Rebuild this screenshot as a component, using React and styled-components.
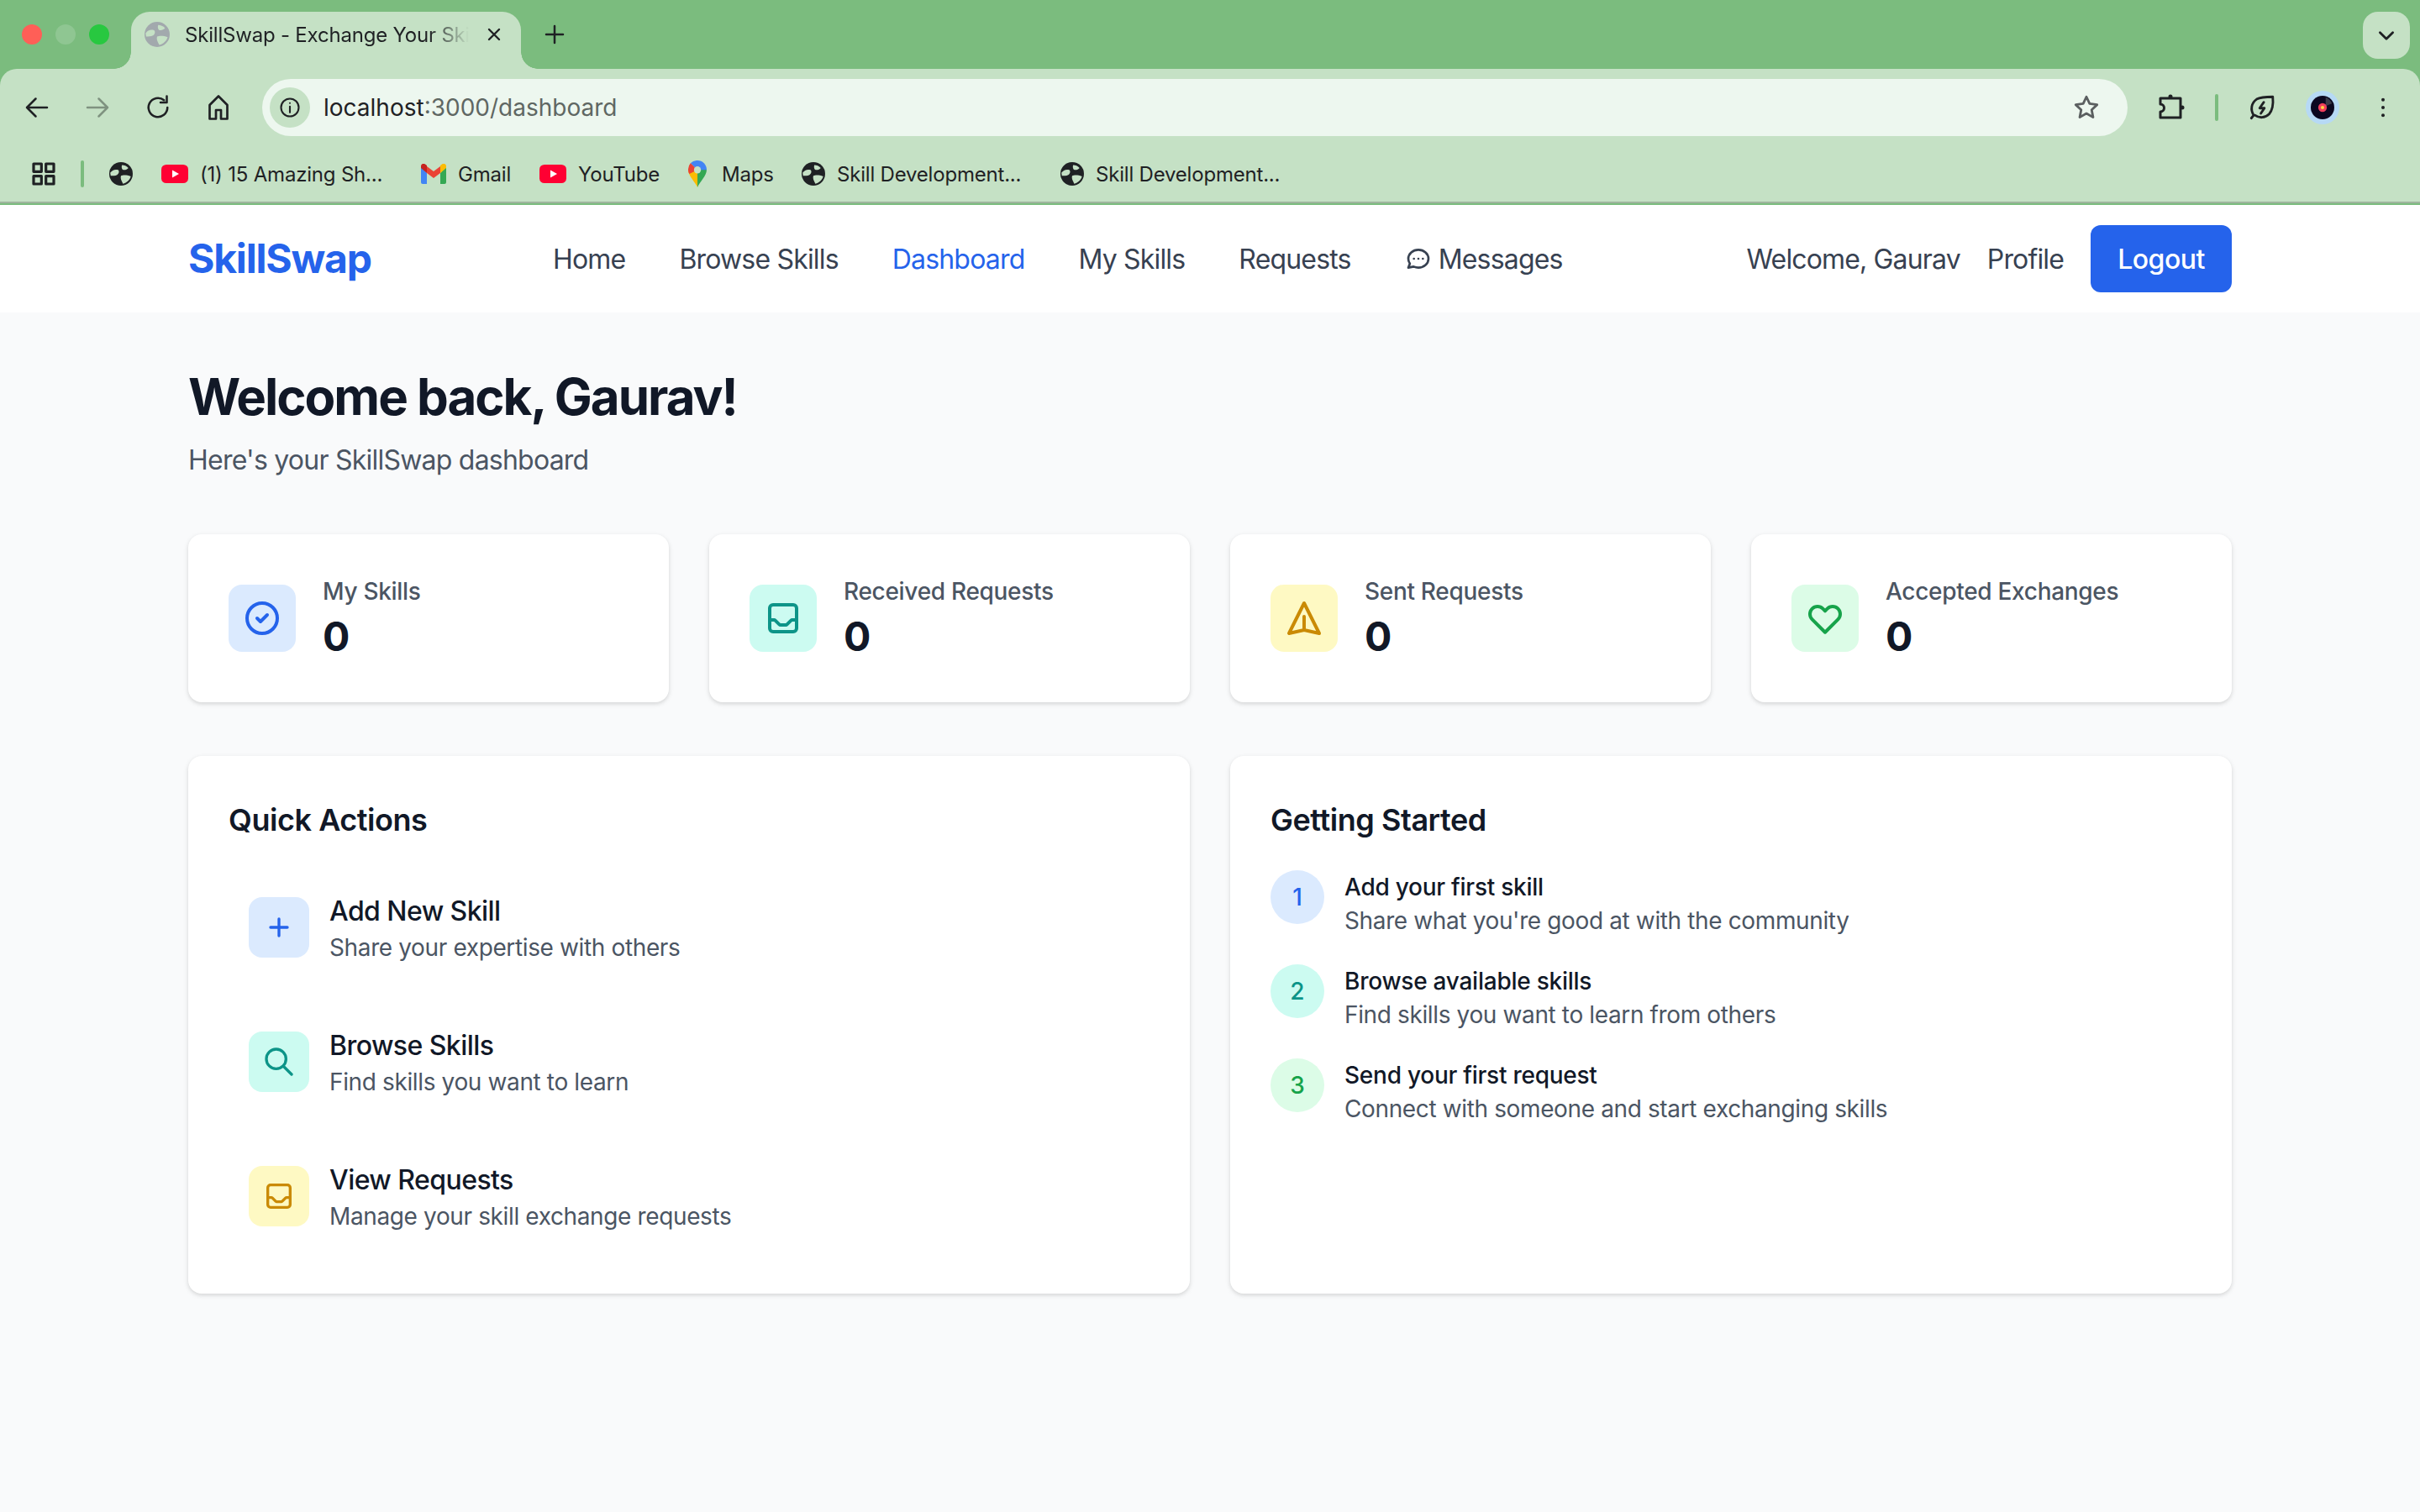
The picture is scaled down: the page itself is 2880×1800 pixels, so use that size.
import styled, { createGlobalStyle } from "styled-components";

const Global = createGlobalStyle`
  * { box-sizing: border-box; }
  html, body { margin: 0; padding: 0; background: #f9fafb; }
  body { font-family: Inter, "Liberation Sans", sans-serif; }
`;

const Page = styled.div`
  width: 2880px;
  height: 1800px;
  overflow: hidden;
  display: flex;
  flex-direction: column;
  background: #f9fafb;
`;

/* browser chrome */
const Chrome = styled.div`
  height: 244px;
  background: #7bbc7e;
  display: flex;
  flex-direction: column;
  color: #1f2124;
`;

const TabStrip = styled.div`
  height: 82px;
  display: flex;
  align-items: flex-start;
  padding: 14px 12px 0 26px;
`;

const Lights = styled.div`
  display: flex;
  gap: 16px;
  padding-top: 15px;
  margin-right: 26px;
`;

const Light = styled.span`
  width: 24px;
  height: 24px;
  border-radius: 50%;
  background: ${(p) => p.$color};
`;

const Tab = styled.div`
  position: relative;
  width: 464px;
  height: 68px;
  background: #c5e1c5;
  border-radius: 22px 22px 0 0;
  display: flex;
  align-items: center;
  padding: 0 20px 14px 16px;
  font-size: 24px;
  letter-spacing: -0.2px;
  gap: 18px;

  &::before, &::after {
    content: "";
    position: absolute;
    bottom: 0;
    width: 20px;
    height: 20px;
  }
  &::before {
    left: -20px;
    background: radial-gradient(circle at 0 0, #7bbc7e 19.5px, #c5e1c5 20px);
  }
  &::after {
    right: -20px;
    background: radial-gradient(circle at 100% 0, #7bbc7e 19.5px, #c5e1c5 20px);
  }
`;

const TabTitle = styled.span`
  flex: 1;
  white-space: nowrap;
  overflow: hidden;
  -webkit-mask-image: linear-gradient(90deg, #000 86%, transparent 100%);
  mask-image: linear-gradient(90deg, #000 86%, transparent 100%);
`;

const NewTab = styled.div`
  margin-left: 25px;
  height: 54px;
  display: flex;
  align-items: center;
`;

const TabMenu = styled.div`
  margin-left: auto;
  width: 56px;
  height: 56px;
  border-radius: 18px;
  background: #c5e1c5;
  display: flex;
  align-items: center;
  justify-content: center;
`;

const Toolbar = styled.div`
  height: 80px;
  background: #c5e1c5;
  border-radius: 20px 20px 0 0;
  display: flex;
  align-items: center;
  padding: 12px 0 0 26px;
`;

const ToolButton = styled.div`
  width: 36px;
  height: 44px;
  margin-right: ${(p) => p.$gap || 36}px;
  display: flex;
  align-items: center;
  justify-content: center;
`;

const Omnibox = styled.div`
  width: 2220px;
  height: 68px;
  border-radius: 34px;
  background: #edf7ef;
  display: flex;
  align-items: center;
  padding: 0 32px 0 9px;
  font-size: 28px;
`;

const SiteInfo = styled.div`
  width: 48px;
  height: 48px;
  border-radius: 50%;
  background: #c5e1c5;
  display: flex;
  align-items: center;
  justify-content: center;
  margin-right: 16px;
`;

const UrlHost = styled.span`
  color: #1f2124;
`;

const UrlPath = styled.span`
  color: #5f6763;
`;

const ToolRight = styled.div`
  margin-left: auto;
  display: flex;
  align-items: center;
`;

const ExtArea = styled.div`
  display: flex;
  align-items: center;
  margin-left: 34px;
`;

const VBar = styled.span`
  width: 4px;
  height: 32px;
  border-radius: 2px;
  background: #7bbc7e;
  margin: ${(p) => p.$margin};
`;

const Bookmarks = styled.div`
  height: 80px;
  background: #c5e1c5;
  border-bottom: 2px solid #9fb59f;
  display: flex;
  align-items: center;
  padding: 12px 0 0 36px;
  font-size: 24px;
  letter-spacing: -0.2px;
`;

const Bookmark = styled.div`
  display: flex;
  align-items: center;
  gap: ${(p) => p.$gap || 14}px;
  width: ${(p) => p.$width}px;
  white-space: nowrap;
`;

/* app */
const Nav = styled.nav`
  height: 128px;
  background: #fff;
  flex: none;
  padding: 0 224px;
  display: flex;
  align-items: center;
`;

const Logo = styled.div`
  width: 434px;
  font-size: 48px;
  line-height: 64px;
  font-weight: 700;
  letter-spacing: -1.2px;
  color: #2563eb;
`;

const NavLinks = styled.div`
  display: flex;
  gap: 64px;
  align-items: center;
`;

const NavLink = styled.a`
  display: flex;
  align-items: center;
  gap: 8px;
  font-size: 32px;
  letter-spacing: -0.82px;
  color: ${(p) => (p.$active ? "#2563eb" : "#374151")};
`;

const NavRight = styled.div`
  margin-left: auto;
  display: flex;
  align-items: center;
  gap: 32px;
  font-size: 32px;
  letter-spacing: -0.85px;
  color: #374151;
`;

const LogoutButton = styled.button`
  width: 168px;
  height: 80px;
  border: none;
  border-radius: 12px;
  background: #2563eb;
  color: #fff;
  font: 500 32px Inter, sans-serif;
  letter-spacing: -0.5px;
`;

const Main = styled.main`
  padding: 64px 224px 0;
  display: flex;
  flex-direction: column;
`;

const Heading = styled.h1`
  margin: 0;
  font-size: 60px;
  line-height: 72px;
  font-weight: 700;
  letter-spacing: -2px;
  color: #111827;
`;

const Subheading = styled.p`
  margin: 16px 0 64px;
  font-size: 32px;
  line-height: 48px;
  letter-spacing: -0.77px;
  color: #4b5563;
`;

const StatGrid = styled.div`
  display: grid;
  grid-template-columns: repeat(4, 1fr);
  gap: 48px;
  margin-bottom: 64px;
`;

const Card = styled.section`
  background: #fff;
  border-radius: 16px;
  box-shadow: 0 2px 6px rgba(0, 0, 0, 0.1), 0 2px 4px rgba(0, 0, 0, 0.06);
  padding: 48px;
`;

const StatCard = styled(Card)`
  display: flex;
  align-items: center;
  gap: 32px;
  height: 200px;
`;

const IconBox = styled.div`
  width: ${(p) => p.$size}px;
  height: ${(p) => p.$size}px;
  flex: none;
  border-radius: 16px;
  background: ${(p) => p.$bg};
  color: ${(p) => p.$fg};
  display: flex;
  align-items: center;
  justify-content: center;
`;

const StatLabel = styled.div`
  font-size: 28px;
  line-height: 40px;
  font-weight: 500;
  letter-spacing: -0.3px;
  color: #4b5563;
`;

const StatValue = styled.div`
  font-size: 48px;
  line-height: 64px;
  font-weight: 700;
  letter-spacing: -1px;
  color: #111827;
  margin: 2px 0 -2px;
`;

const Columns = styled.div`
  display: grid;
  grid-template-columns: 1fr 1fr;
  gap: 48px;
`;

const PanelTitle = styled.h2`
  margin: 0 0 32px;
  font-size: 36px;
  line-height: 56px;
  font-weight: 600;
  letter-spacing: -0.45px;
  color: #111827;
`;

const ActionList = styled.div`
  display: flex;
  flex-direction: column;
  gap: 24px;
`;

const ActionRow = styled.div`
  display: flex;
  align-items: center;
  gap: 24px;
  padding: 24px;
`;

const ActionTitle = styled.div`
  font-size: 32px;
  line-height: 46px;
  padding-top: 2px;
  font-weight: 500;
  letter-spacing: -0.56px;
  color: #111827;
`;

const Desc = styled.div`
  font-size: 28px;
  line-height: 40px;
  letter-spacing: -0.37px;
  color: #4b5563;
`;

const StepList = styled.div`
  display: flex;
  flex-direction: column;
  gap: 32px;
`;

const StepRow = styled.div`
  display: flex;
  align-items: flex-start;
  gap: 24px;
`;

const StepNumber = styled.div`
  width: 64px;
  height: 64px;
  flex: none;
  border-radius: 50%;
  background: ${(p) => p.$bg};
  color: ${(p) => p.$fg};
  display: flex;
  align-items: center;
  justify-content: center;
  font-size: 28px;
  font-weight: 500;
`;

const StepTitle = styled.div`
  font-size: 28px;
  line-height: 40px;
  font-weight: 500;
  letter-spacing: -0.25px;
  color: #111827;
`;

const VinylRing = styled.div`
  width: 40px;
  height: 40px;
  margin: 0 36px 0 35px;
  border-radius: 50%;
  background: #b6d9f5;
  display: flex;
  align-items: center;
  justify-content: center;
`;

const Outline = ({ size = 48, d, width = 2, color = "currentColor" }) => (
  <svg width={size} height={size} viewBox="0 0 24 24" fill="none" stroke={color} strokeWidth={width} strokeLinecap="round" strokeLinejoin="round">
    {[].concat(d).map((path) => <path key={path} d={path} />)}
  </svg>
);

const Globe = ({ color = "#1f2124", size = 28 }) => (
  <svg width={size} height={size} viewBox="0 0 24 24">
    <circle cx="12" cy="12" r="12" fill={color} />
    <path d="M1 11C3 8 6 7 9 8c1.500 1 1 4-1 5-2 1-4 1-6.500 1zM13 3c2 0 5 1 6.500 3-1.500 2-4.500 2.500-6 1.500-1-1.500-1-3-.5-4.500zM12 14c2-1 6-1 10 .5-1 3.500-4 6.500-8 7.500-1-2.500-3-5-2-8z" fill="#c5e1c5" />
  </svg>
);

const YouTubeIcon = () => (
  <svg width="32" height="22" viewBox="0 0 32 24" preserveAspectRatio="none">
    <rect width="32" height="24" rx="6" fill="#ff0033" />
    <path d="M13 7l8 5-8 5z" fill="#fff" />
  </svg>
);

const GmailIcon = () => (
  <svg width="30" height="24" viewBox="0 0 30 24">
    <path d="M0 3v19a2 2 0 002 2h5V11z" fill="#4285f4" />
    <path d="M30 3v19a2 2 0 01-2 2h-5V11z" fill="#34a853" />
    <path d="M7 11l8 6 8-6V3l-8 6-8-6z" fill="#ea4335" />
    <path d="M0 3c0-3 3-4 5-2.500L7 2v9L0 5z" fill="#c5221f" />
    <path d="M30 3c0-3-3-4-5-2.500L23 2v9l7-6z" fill="#fbbc04" />
  </svg>
);

const MapsIcon = () => (
  <svg width="22" height="32" viewBox="0 0 24 34" preserveAspectRatio="none">
    <path d="M12 34C9 27 0 20 0 11.500L12 12z" fill="#fbbc04" />
    <path d="M12 34c3-7 12-14 12-22.500L12 12z" fill="#34a853" />
    <path d="M3 3.500A12 12 0 0112 0v12z" fill="#4285f4" />
    <path d="M12 0a12 12 0 0112 12H12z" fill="#4285f4" />
    <path d="M3 3.500A12 12 0 000 12c0 2 .6 3.500 1.500 5L12 12z" fill="#ea4335" />
    <circle cx="12" cy="12" r="4.500" fill="#c5e1c5" />
  </svg>
);

const PuzzleIcon = () => (
  <svg width="36" height="36" viewBox="0 0 36 36" fill="none" stroke="#1f2124" strokeWidth="3" strokeLinejoin="round">
    <path d="M5 7h24v23H5v-7a4.500 4.500 0 000-9z" />
    <circle cx="17" cy="5" r="2.500" fill="#1f2124" stroke="none" />
    <circle cx="31" cy="18" r="2.500" fill="#1f2124" stroke="none" />
  </svg>
);

const VinylBadge = () => (
  <VinylRing>
    <svg width="28" height="28" viewBox="0 0 30 30">
      <circle cx="15" cy="15" r="15" fill="#0b0720" />
      <path d="M19 2a14 14 0 018 8l-8 3z" fill="#3a3a48" />
      <circle cx="15" cy="15" r="5.500" fill="#ef3e5c" />
      <circle cx="15" cy="15" r="2.200" fill="#ffd23f" />
    </svg>
  </VinylRing>
);

const inboxPath = "M20 13V6a2 2 0 00-2-2H6a2 2 0 00-2 2v7m16 0v5a2 2 0 01-2 2H6a2 2 0 01-2-2v-5m16 0h-2.586a1 1 0 00-.707.293l-2.414 2.414a1 1 0 01-.707.293h-3.172a1 1 0 01-.707-.293l-2.414-2.414A1 1 0 006.586 13H4";

const stats = [
  { label: "My Skills", bg: "#dbeafe", fg: "#2563eb", d: "M9 12l2 2 4-4m6 2a9 9 0 11-18 0 9 9 0 0118 0z" },
  { label: "Received Requests", bg: "#ccfbf1", fg: "#0d9488", d: inboxPath },
  { label: "Sent Requests", bg: "#fef9c3", fg: "#ca8a04", d: "M12 19l9 2-9-18-9 18 9-2zm0 0v-8" },
  { label: "Accepted Exchanges", bg: "#dcfce7", fg: "#16a34a", d: "M4.318 6.318a4.500 4.500 0 000 6.364L12 20.364l7.682-7.682a4.500 4.500 0 00-6.364-6.364L12 7.636l-1.318-1.318a4.500 4.500 0 00-6.364 0z" },
];

const actions = [
  { title: "Add New Skill", desc: "Share your expertise with others", bg: "#dbeafe", fg: "#2563eb", d: "M12 6v6m0 0v6m0-6h6m-6 0H6" },
  { title: "Browse Skills", desc: "Find skills you want to learn", bg: "#ccfbf1", fg: "#0d9488", d: "M21 21l-6-6m2-5a7 7 0 11-14 0 7 7 0 0114 0z" },
  { title: "View Requests", desc: "Manage your skill exchange requests", bg: "#fef9c3", fg: "#ca8a04", d: inboxPath },
];

const steps = [
  { title: "Add your first skill", desc: "Share what you're good at with the community", bg: "#dbeafe", fg: "#2563eb" },
  { title: "Browse available skills", desc: "Find skills you want to learn from others", bg: "#ccfbf1", fg: "#0d9488" },
  { title: "Send your first request", desc: "Connect with someone and start exchanging skills", bg: "#dcfce7", fg: "#16a34a" },
];

const App = () => {
  return (
    <Page>
      <Global />
      <Chrome>
        <TabStrip>
          <Lights>
            <Light $color="#ff5f57" />
            <Light $color="#8fc692" />
            <Light $color="#28c840" />
          </Lights>
          <Tab>
            <Globe color="#a2a9ad" size={30} />
            <TabTitle>SkillSwap - Exchange Your Skills</TabTitle>
            <Outline size={24} width={2.4} color="#1f2124" d="M6 6l12 12M18 6L6 18" />
          </Tab>
          <NewTab>
            <Outline size={30} width={2} color="#1f2124" d="M12 4v16M4 12h16" />
          </NewTab>
          <TabMenu>
            <Outline size={26} width={2.6} color="#1f2124" d="M5 9l7 7 7-7" />
          </TabMenu>
        </TabStrip>
        <Toolbar>
          <ToolButton>
            <Outline size={36} width={1.7} color="#1f2124" d="M20 12H4M11 5l-7 7 7 7" />
          </ToolButton>
          <ToolButton>
            <Outline size={36} width={1.7} color="#7f9280" d="M4 12h16M13 5l7 7-7 7" />
          </ToolButton>
          <ToolButton>
            <Outline size={36} width={1.7} color="#1f2124" d={["M19.500 12a7.500 7.500 0 11-2.700-5.800", "M19 3v5h-5"]} />
          </ToolButton>
          <ToolButton $gap={34}>
            <Outline size={36} width={1.8} color="#1f2124" d="M5 21V10l7-7 7 7v11h-5v-7h-4v7z" />
          </ToolButton>
          <Omnibox>
            <SiteInfo>
              <Outline size={28} width={1.8} color="#1f2124" d={["M12 11v6M12 7.500v.01", "M21 12a9 9 0 11-18 0 9 9 0 0118 0z"]} />
            </SiteInfo>
            <UrlHost>localhost</UrlHost>
            <UrlPath>:3000/dashboard</UrlPath>
            <ToolRight>
              <Outline size={34} width={2} color="#5b5f60" d="M12 3l2.700 5.800 6.300.8-4.600 4.300 1.200 6.300L12 17l-5.600 3.200 1.200-6.300L3 9.600l6.300-.8z" />
            </ToolRight>
          </Omnibox>
          <ExtArea>
            <PuzzleIcon />
            <VBar $margin="0 35px 0 34px" />
            <Outline size={34} width={2} color="#1f2124" d={["M3 21l2-2.500C2 14 3 8 7.500 5 11 3 16 3 21 3c.500 5 0 11-3 14.500-3.500 3.500-8.500 3.500-12 1", "M13.500 7.500L10 12.500h4l-3 4.500"]} />
            <VinylBadge />
            <Outline size={32} width={3} color="#1f2124" d={["M12 5v.01", "M12 12v.01", "M12 19v.01"]} />
          </ExtArea>
        </Toolbar>
        <Bookmarks>
          <Outline size={32} width={2.4} color="#1f2124" d="M3 3h7v7H3zM14 3h7v7h-7zM3 14h7v7H3zM14 14h7v7h-7z" />
          <VBar $margin="0 30px 0 28px" />
          <Bookmark $width={62}>
            <Globe />
          </Bookmark>
          <Bookmark $width={309}>
            <YouTubeIcon />
            (1) 15 Amazing Sh...
          </Bookmark>
          <Bookmark $width={141}>
            <GmailIcon />
            Gmail
          </Bookmark>
          <Bookmark $width={177}>
            <YouTubeIcon />
            YouTube
          </Bookmark>
          <Bookmark $width={135} $gap={18}>
            <MapsIcon />
            Maps
          </Bookmark>
          <Bookmark $width={308}>
            <Globe />
            Skill Development...
          </Bookmark>
          <Bookmark $width={270}>
            <Globe />
            Skill Development...
          </Bookmark>
        </Bookmarks>
      </Chrome>

      <Nav>
        <Logo>SkillSwap</Logo>
        <NavLinks>
          <NavLink>Home</NavLink>
          <NavLink>Browse Skills</NavLink>
          <NavLink $active>Dashboard</NavLink>
          <NavLink>My Skills</NavLink>
          <NavLink>Requests</NavLink>
          <NavLink>
            <Outline size={32} width={2} d="M8 12h.01M12 12h.01M16 12h.01M21 12c0 4.418-4.030 8-9 8a9.863 9.863 0 01-4.255-.949L3 20l1.395-3.720C3.512 15.042 3 13.574 3 12c0-4.418 4.030-8 9-8s9 3.582 9 8z" />
            Messages
          </NavLink>
        </NavLinks>
        <NavRight>
          <span>Welcome, Gaurav</span>
          <span>Profile</span>
          <LogoutButton>Logout</LogoutButton>
        </NavRight>
      </Nav>

      <Main>
        <Heading>Welcome back, Gaurav!</Heading>
        <Subheading>Here's your SkillSwap dashboard</Subheading>

        <StatGrid>
          {stats.map((s) => (
            <StatCard key={s.label}>
              <IconBox $size={80} $bg={s.bg} $fg={s.fg}>
                <Outline d={s.d} />
              </IconBox>
              <div>
                <StatLabel>{s.label}</StatLabel>
                <StatValue>0</StatValue>
              </div>
            </StatCard>
          ))}
        </StatGrid>

        <Columns>
          <Card>
            <PanelTitle>Quick Actions</PanelTitle>
            <ActionList>
              {actions.map((a) => (
                <ActionRow key={a.title}>
                  <IconBox $size={72} $bg={a.bg} $fg={a.fg}>
                    <Outline size={40} d={a.d} />
                  </IconBox>
                  <div>
                    <ActionTitle>{a.title}</ActionTitle>
                    <Desc>{a.desc}</Desc>
                  </div>
                </ActionRow>
              ))}
            </ActionList>
          </Card>
          <Card>
            <PanelTitle>Getting Started</PanelTitle>
            <StepList>
              {steps.map((s, i) => (
                <StepRow key={s.title}>
                  <StepNumber $bg={s.bg} $fg={s.fg}>{i + 1}</StepNumber>
                  <div>
                    <StepTitle>{s.title}</StepTitle>
                    <Desc>{s.desc}</Desc>
                  </div>
                </StepRow>
              ))}
            </StepList>
          </Card>
        </Columns>
      </Main>
    </Page>
  );
};

export default App;
